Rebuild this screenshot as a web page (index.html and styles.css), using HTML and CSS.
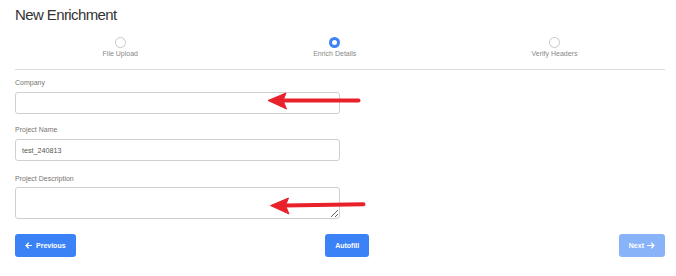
FILE: index.html
```html
<!DOCTYPE html>
<html lang="en">
<head>
    <meta charset="UTF-8">
    <meta name="viewport" content="width=device-width, initial-scale=1.0">
    <title>New Enrichment</title>
    <link rel="stylesheet" href="styles.css">
</head>
<body>
    <div class="page">
        <h1>New Enrichment</h1>

        <div class="stepper">
            <div class="step">
                <span class="step-dot"></span>
                <span class="step-label">File Upload</span>
            </div>
            <div class="step">
                <span class="step-dot active"></span>
                <span class="step-label">Enrich Details</span>
            </div>
            <div class="step">
                <span class="step-dot"></span>
                <span class="step-label">Verify Headers</span>
            </div>
        </div>

        <form class="form">
            <div class="field">
                <label for="company">Company</label>
                <input type="text" id="company">
            </div>
            <div class="field">
                <label for="projectName">Project Name</label>
                <input type="text" id="projectName" value="test_240813">
            </div>
            <div class="field field-desc">
                <label for="projectDesc">Project Description</label>
                <textarea id="projectDesc"></textarea>
            </div>
        </form>

        <div class="button-group">
            <button class="btn">
                <svg width="7" height="7" viewBox="0 0 7 7"><path d="M6.5 3.5H1M3.5 1L1 3.5L3.5 6" fill="none" stroke="#fff" stroke-width="1.1" stroke-linecap="round" stroke-linejoin="round"/></svg>
                Previous
            </button>
            <button class="btn">Autofill</button>
            <button class="btn btn-disabled">
                Next
                <svg width="8" height="7" viewBox="0 0 8 7"><path d="M0.5 3.5H7M4.5 1L7 3.5L4.5 6" fill="none" stroke="#fff" stroke-width="1.1" stroke-linecap="round" stroke-linejoin="round"/></svg>
            </button>
        </div>
    </div>

    <!-- annotation arrows drawn over the form -->
    <svg class="annotations" width="676" height="276" viewBox="0 0 676 276">
        <g fill="#e8212b" stroke="#e8212b">
            <line x1="282" y1="100.5" x2="358.5" y2="100.5" stroke-width="4" stroke-linecap="round"/>
            <path d="M268 100.5L286 93L283 100.5L286.5 109Z" stroke-width="1" stroke-linejoin="round"/>
            <line x1="285" y1="205.5" x2="363.5" y2="204.3" stroke-width="4" stroke-linecap="round"/>
            <path d="M270.5 205.6L288.5 198L285.5 205.4L289 214Z" stroke-width="1" stroke-linejoin="round"/>
        </g>
    </svg>
</body>
</html>
```

FILE: styles.css
```css
* {
    box-sizing: border-box;
    font-family: 'Liberation Sans', Arial, sans-serif;
}

body {
    margin: 0;
    background: #fff;
    color: #333;
}

.page {
    padding: 0 11px 0 15px;
}

h1 {
    margin: 0;
    padding-top: 6px;
    font-size: 15px;
    line-height: 17px;
    font-weight: 400;
    letter-spacing: -0.6px;
    color: #333;
}

.stepper {
    display: flex;
    justify-content: space-around;
    margin-top: 14px;
    padding-bottom: 11px;
    border-bottom: 1px solid #dcdcdc;
}

.step {
    display: flex;
    flex-direction: column;
    align-items: center;
    gap: 2px;
}

.step-dot {
    width: 11px;
    height: 11px;
    border-radius: 50%;
    border: 1px solid #c8c8c8;
    background: #fff;
}

.step-dot.active {
    border: 3px solid #3b82f6;
}

.step-label {
    font-size: 7px;
    line-height: 8px;
    color: #888;
}

.form {
    display: flex;
    flex-direction: column;
    gap: 12px;
    padding-top: 9px;
    width: 325px;
}

.field {
    display: flex;
    flex-direction: column;
    gap: 5px;
}

.field-desc {
    margin-top: 2px;
    gap: 4px;
}

label {
    font-size: 7px;
    line-height: 8px;
    color: #7a7470;
}

input,
textarea {
    display: block;
    width: 100%;
    height: 22px;
    margin: 0;
    padding: 5px 6px 4px;
    border: 1px solid #cfcfcf;
    border-radius: 3px;
    font-size: 7.2px;
    line-height: 11px;
    color: #555;
    background: #fff;
    outline: none;
}

textarea {
    height: 32px;
    padding: 5px 6px;
}

.button-group {
    display: flex;
    justify-content: space-between;
    margin-top: 15px;
}

.btn {
    display: flex;
    align-items: center;
    gap: 4px;
    height: 23px;
    padding: 0 10px;
    border: none;
    border-radius: 3px;
    background: #3b82f6;
    color: #fff;
    font-size: 7px;
    font-weight: 700;
    cursor: pointer;
}

.btn-disabled {
    opacity: 0.6;
    gap: 3px;
    cursor: default;
}

.annotations {
    position: absolute;
    top: 0;
    left: 0;
    pointer-events: none;
}
```
